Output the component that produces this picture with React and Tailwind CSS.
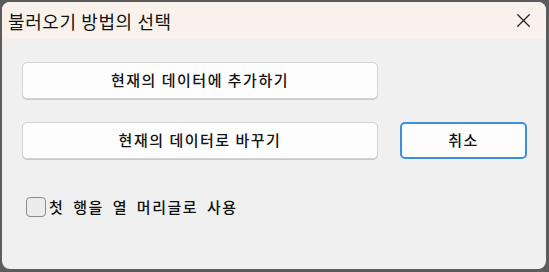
import { X } from "lucide-react";

const font = { fontFamily: '"Noto Sans CJK KR", "Noto Sans", sans-serif' };

function Btn({ children, primary, className = "" }) {
  return (
    <button
      className={`h-[37px] rounded-[5px] bg-[#fdfdfd] text-[15px] font-medium tracking-[1.5px] text-[#111] ${
        primary ? "border-2 border-[#3b8fe0]" : "border border-[#d4d4d4] shadow-[0_1px_0_#c8c8c8]"
      } ${className}`}
    >
      {children}
    </button>
  );
}

export default function App() {
  return (
    <div className="w-[549px] h-[272px] bg-[#5c5c5c] pt-[2px] pl-[2px] pr-[3px] pb-[3px]" style={font}>
      <div className="h-full rounded-[8px] overflow-hidden bg-[#f0f0f0] flex flex-col">
        {/* Title bar */}
        <div className="h-[37px] bg-[#f9f1ec] flex items-center justify-between pl-[6px] pr-[11px]">
          <span className="text-[18px] tracking-[0.6px] text-[#111] pt-[2px]">불러오기 방법의 선택</span>
          <X size={23} strokeWidth={1.3} className="text-[#222]" />
        </div>

        {/* Body */}
        <div className="flex flex-col pl-[20px] pt-[23px]">
          <Btn className="w-[356px]">현재의 데이터에 추가하기</Btn>
          <div className="flex gap-[22px] mt-[23px]">
            <Btn className="w-[356px]">현재의 데이터로 바꾸기</Btn>
            <Btn primary className="w-[127px]">취소</Btn>
          </div>
          <label className="flex items-center gap-[3px] mt-[37px] ml-[4px] text-[15px] font-medium tracking-[1.5px] [word-spacing:4px] text-[#111]">
            <span className="w-[20px] h-[20px] rounded-[4px] border border-[#8a8a8a] bg-[#ececec]" />
            첫 행을 열 머리글로 사용
          </label>
        </div>
      </div>
    </div>
  );
}
